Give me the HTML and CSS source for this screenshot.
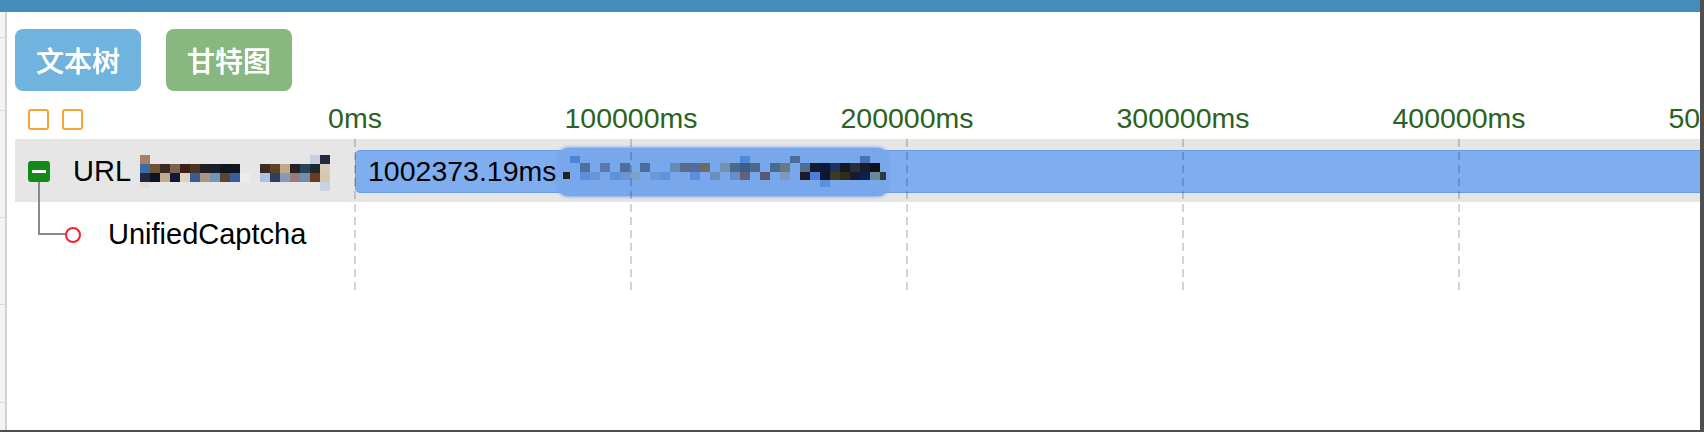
FILE: index.html
```html
<!DOCTYPE html>
<html lang="zh">
<head>
<meta charset="utf-8">
<title>Trace</title>
<link rel="stylesheet" href="styles.css">
</head>
<body>
<div class="screen">
  <div class="upper">
    <div class="app">
      <div class="topbar"></div>
      <div class="main">
        <div class="strip">
          <div class="seg seg-a"></div>
          <div class="seg seg-b"></div>
          <div class="seg seg-c"></div>
          <div class="seg seg-d"></div>
          <div class="seg seg-e"></div>
        </div>
        <div class="content">
          <div class="toolbar">
            <button class="btn btn-tree">文本树</button>
            <button class="btn btn-gantt">甘特图</button>
          </div>
          <div class="chart">
            <div class="axis">
              <div class="checks">
                <span class="check"></span>
                <span class="check"></span>
              </div>
              <div class="ticks">
                <span class="tick" style="left:0px">0ms</span>
                <span class="tick" style="left:276px">100000ms</span>
                <span class="tick" style="left:552px">200000ms</span>
                <span class="tick" style="left:828px">300000ms</span>
                <span class="tick" style="left:1104px">400000ms</span>
                <span class="tick" style="left:1380px">500000ms</span>
              </div>
            </div>
            <div class="rows">
              <div class="row row-parent">
                <div class="cell-tree">
                  <span class="toggle"><span class="minus"></span></span>
                  <span class="name">URL</span>
                  <svg class="mosaic-url" width="192" height="36" viewBox="0 0 192 36">
                    <rect x="0" y="0" width="10" height="9" fill="#a88068"/>
                    <rect x="170" y="0" width="10" height="9" fill="#c8d0e0"/>
                    <rect x="180" y="0" width="10" height="9" fill="#222840"/>
                    <rect x="0" y="9" width="10" height="9" fill="#3b6ca3"/>
                    <rect x="10" y="9" width="10" height="9" fill="#6e5434"/>
                    <rect x="20" y="9" width="10" height="9" fill="#3a2a22"/>
                    <rect x="30" y="9" width="10" height="9" fill="#7a6250"/>
                    <rect x="40" y="9" width="10" height="9" fill="#3d1f1a"/>
                    <rect x="50" y="9" width="10" height="9" fill="#4b3322"/>
                    <rect x="60" y="9" width="10" height="9" fill="#1e1e24"/>
                    <rect x="70" y="9" width="10" height="9" fill="#1b1e2a"/>
                    <rect x="80" y="9" width="10" height="9" fill="#10141e"/>
                    <rect x="90" y="9" width="10" height="9" fill="#0f1622"/>
                    <rect x="120" y="9" width="10" height="9" fill="#3b2c22"/>
                    <rect x="130" y="9" width="10" height="9" fill="#5c4228"/>
                    <rect x="140" y="9" width="10" height="9" fill="#c2a88a"/>
                    <rect x="150" y="9" width="10" height="9" fill="#232323"/>
                    <rect x="160" y="9" width="10" height="9" fill="#2c4257"/>
                    <rect x="170" y="9" width="10" height="9" fill="#1c2a30"/>
                    <rect x="180" y="9" width="10" height="9" fill="#d8cbb8"/>
                    <rect x="0" y="18" width="10" height="9" fill="#23263f"/>
                    <rect x="10" y="18" width="10" height="9" fill="#0b1420"/>
                    <rect x="20" y="18" width="10" height="9" fill="#c3ab91"/>
                    <rect x="30" y="18" width="10" height="9" fill="#14163a"/>
                    <rect x="40" y="18" width="10" height="9" fill="#e0d2c0"/>
                    <rect x="50" y="18" width="10" height="9" fill="#3a5b9a"/>
                    <rect x="60" y="18" width="10" height="9" fill="#ad9480"/>
                    <rect x="70" y="18" width="10" height="9" fill="#6f95b8"/>
                    <rect x="80" y="18" width="10" height="9" fill="#5a4432"/>
                    <rect x="90" y="18" width="10" height="9" fill="#36609c"/>
                    <rect x="100" y="18" width="10" height="9" fill="#ececec"/>
                    <rect x="120" y="18" width="10" height="9" fill="#a8c4de"/>
                    <rect x="130" y="18" width="10" height="9" fill="#323e5c"/>
                    <rect x="140" y="18" width="10" height="9" fill="#8a98b8"/>
                    <rect x="150" y="18" width="10" height="9" fill="#9a7878"/>
                    <rect x="160" y="18" width="10" height="9" fill="#7090a8"/>
                    <rect x="170" y="18" width="10" height="9" fill="#6a3a26"/>
                    <rect x="180" y="18" width="10" height="9" fill="#d6c6b2"/>
                    <rect x="0" y="27" width="10" height="6" fill="#e6ded6"/>
                    <rect x="180" y="27" width="10" height="9" fill="#c6d4e0"/>
                  </svg>
                </div>
                <div class="cell-time">
                  <div class="bar" style="width:2766px">
                    <span class="bar-label">1002373.19ms</span>
                    <div class="blur-box">
                      <svg class="mosaic-bar" width="332" height="48" viewBox="0 0 332 48">
                        <rect x="13" y="8" width="10" height="7" fill="#4a86d8"/>
                        <rect x="183" y="8" width="10" height="7" fill="#4d88da"/>
                        <rect x="233" y="8" width="10" height="7" fill="#4c6c9c"/>
                        <rect x="303" y="8" width="10" height="7" fill="#4a72b2"/>
                        <rect x="23" y="15" width="10" height="9" fill="#4f6f9c"/>
                        <rect x="43" y="15" width="10" height="9" fill="#587aa8"/>
                        <rect x="63" y="15" width="10" height="9" fill="#4e6e9c"/>
                        <rect x="83" y="15" width="10" height="9" fill="#4c6c9a"/>
                        <rect x="113" y="15" width="10" height="9" fill="#6a8ab2"/>
                        <rect x="123" y="15" width="10" height="9" fill="#5a6c8c"/>
                        <rect x="133" y="15" width="10" height="9" fill="#526ca2"/>
                        <rect x="143" y="15" width="10" height="9" fill="#6c6c62"/>
                        <rect x="163" y="15" width="10" height="9" fill="#7292b2"/>
                        <rect x="173" y="15" width="10" height="9" fill="#4a6a8a"/>
                        <rect x="183" y="15" width="10" height="9" fill="#3c5c8c"/>
                        <rect x="193" y="15" width="10" height="9" fill="#4a6a8a"/>
                        <rect x="213" y="15" width="10" height="9" fill="#4a6a8c"/>
                        <rect x="223" y="15" width="10" height="9" fill="#687a82"/>
                        <rect x="243" y="15" width="10" height="9" fill="#4f6f90"/>
                        <rect x="253" y="15" width="10" height="9" fill="#141c30"/>
                        <rect x="263" y="15" width="10" height="9" fill="#0f1838"/>
                        <rect x="273" y="15" width="10" height="9" fill="#1c3260"/>
                        <rect x="283" y="15" width="10" height="9" fill="#111a22"/>
                        <rect x="293" y="15" width="10" height="9" fill="#2c2c3c"/>
                        <rect x="303" y="15" width="10" height="9" fill="#1a1a2a"/>
                        <rect x="313" y="15" width="10" height="9" fill="#10101a"/>
                        <rect x="6" y="24" width="7" height="7" fill="#222222"/>
                        <rect x="23" y="24" width="10" height="8" fill="#5a8ede"/>
                        <rect x="33" y="24" width="10" height="8" fill="#6a96d8"/>
                        <rect x="53" y="24" width="10" height="8" fill="#5d92dc"/>
                        <rect x="63" y="24" width="10" height="8" fill="#6a94d4"/>
                        <rect x="73" y="24" width="10" height="8" fill="#7aa0cc"/>
                        <rect x="93" y="24" width="10" height="8" fill="#6b9ad0"/>
                        <rect x="103" y="24" width="10" height="8" fill="#5c94e0"/>
                        <rect x="133" y="24" width="10" height="8" fill="#5a8ede"/>
                        <rect x="153" y="24" width="10" height="8" fill="#6a8cc0"/>
                        <rect x="173" y="24" width="10" height="8" fill="#6a8cc4"/>
                        <rect x="183" y="24" width="10" height="8" fill="#64607a"/>
                        <rect x="203" y="24" width="10" height="8" fill="#5a5a70"/>
                        <rect x="223" y="24" width="10" height="8" fill="#7a9ac4"/>
                        <rect x="243" y="24" width="10" height="8" fill="#1a1a28"/>
                        <rect x="253" y="24" width="10" height="8" fill="#4a80d8"/>
                        <rect x="263" y="24" width="10" height="8" fill="#0c1830"/>
                        <rect x="273" y="24" width="10" height="8" fill="#3a3a20"/>
                        <rect x="283" y="24" width="10" height="8" fill="#302a18"/>
                        <rect x="293" y="24" width="10" height="8" fill="#181830"/>
                        <rect x="303" y="24" width="10" height="8" fill="#0c2050"/>
                        <rect x="313" y="24" width="10" height="8" fill="#6a8898"/>
                        <rect x="323" y="24" width="6" height="8" fill="#303840"/>
                        <rect x="263" y="32" width="10" height="7" fill="#5a92e0"/>
                      </svg>
                    </div>
                  </div>
                </div>
              </div>
              <div class="row row-child">
                <span class="connector"></span>
                <div class="cell-tree cell-tree-child">
                  <span class="dot"></span>
                  <span class="name">UnifiedCaptcha</span>
                </div>
                <div class="cell-time"></div>
              </div>
            </div>
            <div class="grid">
              <span class="gridline" style="left:0px"></span>
              <span class="gridline" style="left:276px"></span>
              <span class="gridline" style="left:552px"></span>
              <span class="gridline" style="left:828px"></span>
              <span class="gridline" style="left:1104px"></span>
              <span class="gridline" style="left:1380px"></span>
            </div>
          </div>
        </div>
      </div>
    </div>
    <div class="edge-r"></div>
  </div>
  <div class="edge-b"></div>
</div>
</body>
</html>
```

FILE: styles.css
```css
* {
  box-sizing: border-box;
}

html, body {
  margin: 0;
  padding: 0;
  background: #ffffff;
}

body {
  font-family: "Liberation Sans", Arial, "Noto Sans CJK SC", sans-serif;
  color: #000000;
}

.screen {
  width: 1704px;
  height: 432px;
  display: flex;
  flex-direction: column;
  overflow: hidden;
}

.upper {
  flex: 1;
  display: flex;
  min-height: 0;
}

.app {
  flex: 1;
  display: flex;
  flex-direction: column;
  overflow: hidden;
  min-width: 0;
}

.topbar {
  height: 12px;
  background: #468cba;
  flex: none;
}

.main {
  flex: 1;
  display: flex;
  min-height: 0;
}

.strip {
  width: 7px;
  flex: none;
  background: #f3f3f3;
  border-right: 2px solid #d2d2d2;
  display: flex;
  flex-direction: column;
}

.seg {
  border-bottom: 1px solid #dadada;
  flex: none;
}

.seg-a { height: 26px; }
.seg-b { height: 73px; }
.seg-c { height: 107px; }
.seg-d { height: 87px; }
.seg-e { height: 98px; }

.content {
  flex: 1;
  min-width: 0;
  display: flex;
  flex-direction: column;
}

.toolbar {
  display: flex;
  gap: 25px;
  padding: 17px 0 0 8px;
}

.btn {
  width: 126px;
  height: 62px;
  border: none;
  border-radius: 8px;
  color: #ffffff;
  font-family: "Noto Sans CJK SC", "Liberation Sans", sans-serif;
  font-size: 28px;
  font-weight: 500;
  line-height: 62px;
  padding: 0;
  letter-spacing: 0;
  text-shadow: 0 0 0.6px #ffffff;
}

.btn-tree {
  background: #6fb3de;
}

.btn-gantt {
  background: #88b77f;
}

.chart {
  position: relative;
  margin: 4px 0 0 8px;
}

.axis {
  height: 44px;
  position: relative;
}

.checks {
  display: flex;
  gap: 13px;
  padding: 14px 0 0 13px;
}

.check {
  width: 21px;
  height: 21px;
  border: 2px solid #f6a432;
  border-radius: 3px;
  background: #ffffff;
}

.ticks {
  position: absolute;
  left: 340px;
  top: 0;
}

.tick {
  position: absolute;
  top: 7px;
  transform: translateX(-50%);
  font-size: 28.5px;
  line-height: 32px;
  color: #2b6224;
  white-space: nowrap;
}

.rows {
  display: flex;
  flex-direction: column;
}

.row {
  display: flex;
  position: relative;
}

.row-parent {
  height: 63px;
  background: #e6e6e6;
}

.row-child {
  height: 64px;
}

.cell-tree {
  width: 340px;
  flex: none;
  display: flex;
  align-items: center;
  padding-left: 13px;
}

.cell-tree-child {
  padding-left: 50px;
}

.toggle {
  width: 22px;
  height: 21px;
  border-radius: 3px;
  background: #148a18;
  display: flex;
  align-items: center;
  justify-content: center;
  margin-top: 1px;
}

.minus {
  width: 14px;
  height: 3px;
  background: #ffffff;
}

.name {
  font-size: 29px;
  line-height: 34px;
  white-space: nowrap;
}

.row-parent .name {
  margin-left: 23px;
}

.mosaic-url {
  margin-left: 9px;
  margin-top: 4px;
  flex: none;
}

.dot {
  width: 16px;
  height: 16px;
  border: 2.5px solid #f4202e;
  border-radius: 50%;
  background: #ffffff;
  flex: none;
  margin-top: 1px;
}

.cell-tree-child .name {
  margin-left: 27px;
}

.connector {
  position: absolute;
  left: 23px;
  top: -20px;
  width: 27px;
  height: 53px;
  border-left: 2px solid #8a8a8a;
  border-bottom: 2px solid #8a8a8a;
}

.cell-time {
  flex: 1;
  position: relative;
  min-width: 0;
}

.bar {
  position: relative;
  margin-top: 11px;
  height: 43px;
  background: #7faef0;
  border: 1px solid #6c9ee4;
  border-radius: 5px;
  padding-left: 12px;
}

.bar-label {
  font-size: 28.5px;
  line-height: 41px;
  white-space: nowrap;
}

.blur-box {
  position: absolute;
  left: 201px;
  top: -3px;
  width: 332px;
  height: 48px;
  border-radius: 12px;
  background: #79a7eb;
  box-shadow: 0 0 3px 1px #7ba8ea;
}

.mosaic-bar {
  display: block;
}

.grid {
  position: absolute;
  left: 340px;
  top: 44px;
  height: 152px;
  pointer-events: none;
}

.gridline {
  position: absolute;
  top: 0;
  width: 2px;
  height: 152px;
  margin-left: -1px;
  background: repeating-linear-gradient(to bottom, rgba(0, 0, 0, 0.17) 0 8px, transparent 8px 13px);
}

.edge-r {
  width: 4px;
  flex: none;
  background: #4f4f4f;
}

.edge-b {
  height: 2px;
  flex: none;
  background: #4f4f4f;
}
```
